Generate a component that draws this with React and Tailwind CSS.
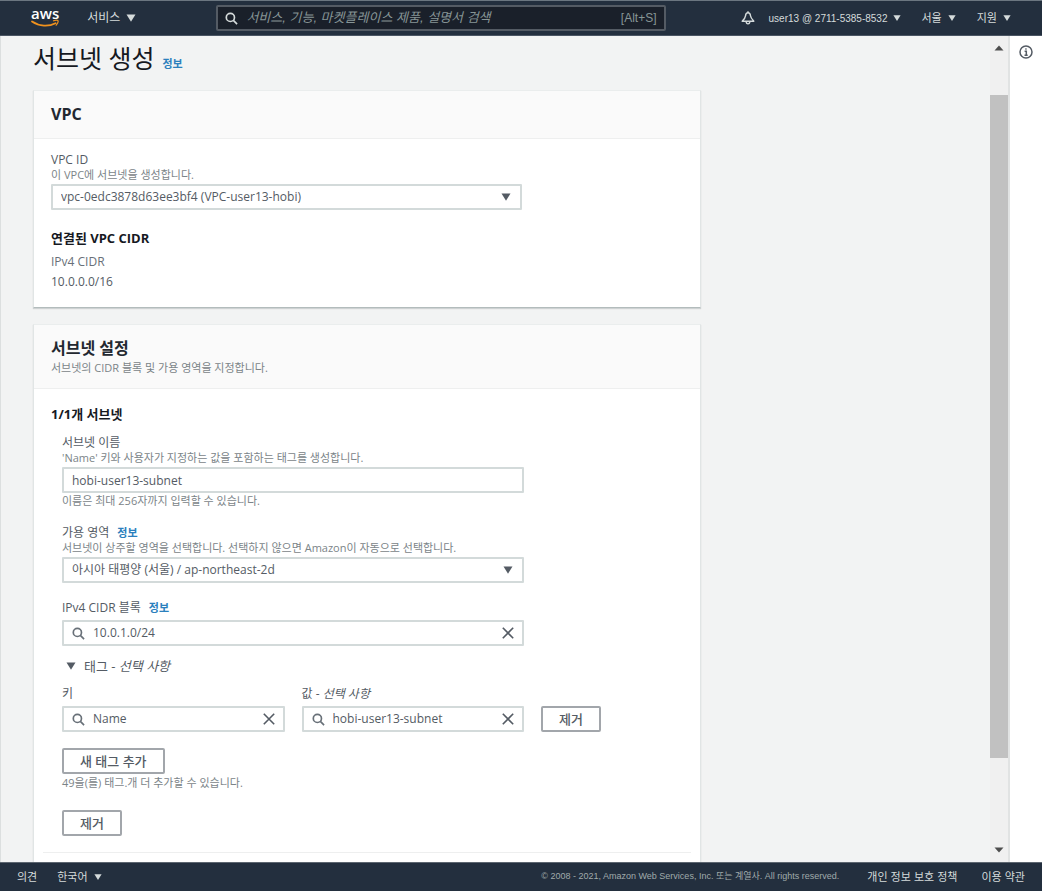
import { useState } from "react";

function Caret({ className = "h-2 w-[10px]" }) {
  return (
    <svg viewBox="0 0 10 8" className={className} fill="currentColor" aria-hidden="true">
      <path d="M0.5 0.5h9L5 7.7z" />
    </svg>
  );
}

function SearchIcon({ className }) {
  return (
    <svg
      viewBox="0 0 14 14"
      className={className}
      fill="none"
      stroke="currentColor"
      strokeWidth={1.8}
      aria-hidden="true"
    >
      <circle cx="5.8" cy="5.8" r="4.4" />
      <path d="M9 9l4 4" />
    </svg>
  );
}

function BellIcon() {
  return (
    <svg
      viewBox="0 0 14 14"
      className="h-[14px] w-[14px]"
      fill="none"
      stroke="currentColor"
      strokeWidth={1.4}
      strokeLinejoin="round"
      aria-hidden="true"
    >
      <path d="M7 1.8C5.6 1.8 4.7 3 4.5 4.8 4.300 7 3.300 8 1.200 10.200h11.600C10.700 8 9.700 7 9.500 4.800 9.300 3 8.400 1.800 7 1.800z" />
      <path d="M5.200 10.600c0 1.400.7 2.300 1.800 2.300s1.800-.9 1.800-2.300M7 0.300v1.500" />
    </svg>
  );
}

function Card({ title, description, children }) {
  return (
    <section className="border border-[#e1e5e5] border-t-[#eaeded] border-b-[#b3bcbc] bg-white shadow-[0_1px_1px_0_rgba(0,28,36,0.15)]">
      <header className="border-b border-[#eeefef] bg-[#fafafa] px-[17px] py-[13px]">
        <h2 className="text-[16px] leading-[21px] font-bold text-[#232830]">{title}</h2>
        {description ? (
          <p className="mt-[2px] text-[11px] leading-[14px] text-[#7b8488]">{description}</p>
        ) : null}
      </header>
      <div className="px-[17px]">{children}</div>
    </section>
  );
}

function InfoLink() {
  return (
    <a href="#info" className="ml-2 text-[11px] leading-none font-bold text-[#2b80bd]">
      정보
    </a>
  );
}

function Field({ id, label, info, description, hint, children }) {
  return (
    <div>
      <div className="text-[12px] leading-4 text-[#545b64]">
        <label htmlFor={id}>{label}</label>
        {info ? <InfoLink /> : null}
      </div>
      {description ? (
        <p className="text-[11px] leading-[14px] text-[#7b8488]">{description}</p>
      ) : null}
      <div className={description ? "mt-[2px]" : "mt-1"}>{children}</div>
      {hint ? <p className="mt-px text-[11px] leading-[14px] text-[#7b8488]">{hint}</p> : null}
    </div>
  );
}

function SelectBox({ id, options }) {
  return (
    <div className="relative">
      <select
        id={id}
        className="block h-[26px] w-full appearance-none rounded-[1px] border-2 border-[#d3dada] bg-white px-2 text-[12px] leading-4 text-[#545b64] outline-none"
      >
        {options.map((option) => (
          <option key={option}>{option}</option>
        ))}
      </select>
      <span className="pointer-events-none absolute inset-y-0 right-[11px] flex items-center text-[#545b64]">
        <Caret />
      </span>
    </div>
  );
}

function SearchBox({ id, value, onChange }) {
  return (
    <div className="flex h-[26px] items-center rounded-[1px] border-2 border-[#d3dada] bg-white px-2 text-[#687078]">
      <SearchIcon className="h-[13px] w-[13px] shrink-0" />
      <input
        id={id}
        type="text"
        value={value}
        onChange={(e) => onChange(e.target.value)}
        className="min-w-0 flex-1 bg-transparent pl-2 text-[12px] leading-4 text-[#545b64] outline-none"
      />
      <button type="button" aria-label="지우기" onClick={() => onChange("")} className="shrink-0">
        <svg
          viewBox="0 0 12 12"
          className="h-3 w-3"
          fill="none"
          stroke="#545b64"
          strokeWidth={1.6}
          aria-hidden="true"
        >
          <path d="M0.8 0.8l10.400 10.400M11.200 0.800L0.800 11.200" />
        </svg>
      </button>
    </div>
  );
}

function Button({ children }) {
  return (
    <button
      type="button"
      className="block h-[26px] rounded-[2px] border-2 border-[#a2a6ab] bg-white px-4 text-[13px] leading-4 font-medium text-[#545b64]"
    >
      {children}
    </button>
  );
}

function TopBar() {
  return (
    <header className="flex h-9 shrink-0 items-center border-t border-b border-t-[#6b7680] border-b-[#4a5563] bg-[#232f3e] pr-[31px] pl-[31px] text-[11px] text-[#d5dbdb]">
      <a href="#home" className="flex flex-col items-center">
        <span className="font-['Open_Sans',sans-serif] text-[15px] leading-[11px] font-semibold text-white">
          aws
        </span>
        <svg viewBox="0 0 28 9" className="h-[9px] w-7" fill="none" aria-hidden="true">
          <path
            d="M1 2.500c7.500 5 16.500 5.300 23.500 1.700"
            stroke="#f0921e"
            strokeWidth={1.800}
            strokeLinecap="round"
          />
          <path
            d="M22.500 1.800c2-.7 4-.6 4.400-.1.4.6-.2 2.800-1.700 4.500"
            stroke="#f0921e"
            strokeWidth={1.200}
            strokeLinecap="round"
          />
        </svg>
      </a>
      <button type="button" className="ml-7 flex items-center gap-[6px] text-[12px]">
        서비스
        <Caret />
      </button>
      <form className="mr-[75px] ml-20 flex h-[26px] flex-1 items-center rounded-[2px] border-2 border-[#545b64] bg-[#1a202a] px-[7px]">
        <SearchIcon className="h-[13px] w-[13px] shrink-0 text-[#d5dbdb]" />
        <input
          type="search"
          aria-label="검색"
          placeholder="서비스, 기능, 마켓플레이스 제품, 설명서 검색"
          className="ml-2 min-w-0 flex-1 bg-transparent text-[13px] outline-none placeholder:text-[#879596] placeholder:italic"
        />
        <span className="text-[12px] text-[#879596]">[Alt+S]</span>
      </form>
      <div className="flex items-center">
        <button type="button" aria-label="알림">
          <BellIcon />
        </button>
        <button type="button" className="ml-[14px] flex items-center gap-[5px] text-[10px]">
          user13 @ 2711-5385-8532
          <Caret className="h-2 w-2" />
        </button>
        <button type="button" className="ml-[21px] flex items-center gap-[6px]">
          서울
          <Caret className="h-2 w-2" />
        </button>
        <button type="button" className="ml-[21px] flex items-center gap-[6px]">
          지원
          <Caret className="h-2 w-2" />
        </button>
      </div>
    </header>
  );
}

function ScrollTrack() {
  return (
    <div className="flex w-[18px] shrink-0 flex-col items-center bg-[#f0f0f0] text-[#4d4d4d]">
      <svg viewBox="0 0 10 6" className="mt-[9px] h-[6px] w-[10px]" fill="currentColor">
        <path d="M5 0.500L9.500 5.500h-9z" />
      </svg>
      <div className="mt-11 w-full flex-[663] bg-[#c1c1c1]" />
      <div className="flex-[89]" />
      <svg viewBox="0 0 10 6" className="mb-[9px] h-[6px] w-[10px]" fill="currentColor">
        <path d="M5 5.500L9.500 0.500h-9z" />
      </svg>
    </div>
  );
}

export default function App() {
  const [name, setName] = useState("hobi-user13-subnet");
  const [cidr, setCidr] = useState("10.0.1.0/24");
  const [tagKey, setTagKey] = useState("Name");
  const [tagValue, setTagValue] = useState("hobi-user13-subnet");

  return (
    <div className="flex h-screen flex-col bg-[#f2f3f3] font-['Liberation_Sans','Noto_Sans_CJK_KR',sans-serif]">
      <TopBar />

      <div className="flex min-h-0 flex-1">
        <main className="min-w-0 flex-1 overflow-hidden border-l border-[#dcdfdf] pl-8 font-['Open_Sans','Noto_Sans_CJK_KR',sans-serif]">
          <h1 className="pt-[6px] text-[25px] leading-8 text-[#16191f]">
            서브넷 생성
            <InfoLink />
          </h1>

          <div className="mt-4 flex max-w-[668px] flex-col gap-4">
            <Card title="VPC">
              <div className="max-w-[471px] pt-[13px]">
                <Field id="vpc-id" label="VPC ID" description="이 VPC에 서브넷을 생성합니다.">
                  <SelectBox id="vpc-id" options={["vpc-0edc3878d63ee3bf4 (VPC-user13-hobi)"]} />
                </Field>
              </div>
              <h3 className="mt-5 text-[13px] leading-4 font-bold text-[#16191f]">
                연결된 VPC CIDR
              </h3>
              <dl className="pb-[17px] text-[12px] leading-4">
                <dt className="mt-2 text-[#687078]">IPv4 CIDR</dt>
                <dd className="mt-1 text-[#545b64]">10.0.0.0/16</dd>
              </dl>
            </Card>

            <Card
              title="서브넷 설정"
              description="서브넷의 CIDR 블록 및 가용 영역을 지정합니다."
            >
              <h3 className="pt-[17px] text-[13px] leading-4 font-bold text-[#16191f]">
                1/1개 서브넷
              </h3>
              <div className="mt-[13px] px-[11px]">
                <div className="flex max-w-[462px] flex-col gap-[17px]">
                  <Field
                    id="subnet-name"
                    label="서브넷 이름"
                    description="'Name' 키와 사용자가 지정하는 값을 포함하는 태그를 생성합니다."
                    hint="이름은 최대 256자까지 입력할 수 있습니다."
                  >
                    <input
                      id="subnet-name"
                      type="text"
                      value={name}
                      onChange={(e) => setName(e.target.value)}
                      className="block h-[26px] w-full rounded-[1px] border-2 border-[#d3dada] bg-white px-2 text-[12px] leading-4 text-[#545b64] outline-none"
                    />
                  </Field>
                  <Field
                    id="zone"
                    label="가용 영역"
                    info
                    description="서브넷이 상주할 영역을 선택합니다. 선택하지 않으면 Amazon이 자동으로 선택합니다."
                  >
                    <SelectBox id="zone" options={["아시아 태평양 (서울) / ap-northeast-2d"]} />
                  </Field>
                  <Field id="cidr" label="IPv4 CIDR 블록" info>
                    <SearchBox id="cidr" value={cidr} onChange={setCidr} />
                  </Field>
                </div>

                <button
                  type="button"
                  className="mt-3 flex items-center gap-2 pl-1 text-[13px] leading-4 text-[#545b64]"
                >
                  <Caret />
                  <span>
                    태그 - <i>선택 사항</i>
                  </span>
                </button>

                <div className="mt-3 flex items-end gap-[17px]">
                  <div className="flex w-full max-w-[462px] gap-[17px]">
                    <div className="flex-1">
                      <Field id="tag-key" label="키">
                        <SearchBox id="tag-key" value={tagKey} onChange={setTagKey} />
                      </Field>
                    </div>
                    <div className="flex-1">
                      <Field
                        id="tag-value"
                        label={
                          <>
                            값 - <i>선택 사항</i>
                          </>
                        }
                      >
                        <SearchBox id="tag-value" value={tagValue} onChange={setTagValue} />
                      </Field>
                    </div>
                  </div>
                  <Button>제거</Button>
                </div>

                <div className="mt-4">
                  <Button>새 태그 추가</Button>
                  <p className="mt-[2px] text-[11px] leading-[14px] text-[#7b8488]">
                    49을(를) 태그.개 더 추가할 수 있습니다.
                  </p>
                </div>
                <div className="mt-5">
                  <Button>제거</Button>
                </div>
              </div>
              <hr className="-mx-2 mt-4 mb-8 border-[#eeefef]" />
            </Card>
          </div>
        </main>

        <ScrollTrack />

        <aside className="flex w-[34px] shrink-0 justify-center border-l-2 border-[#e1e3e3] bg-white">
          <button type="button" aria-label="정보" className="mt-[9px] h-[14px] w-[14px] text-[#545b64]">
            <svg
              viewBox="0 0 14 14"
              className="h-[14px] w-[14px]"
              fill="none"
              stroke="currentColor"
              strokeWidth={1.500}
            >
              <circle cx="7" cy="7" r="6" />
              <path d="M5.600 6.300h1.700v3.900M5.500 10.200h3.200M6.300 4h1.300" />
            </svg>
          </button>
        </aside>
      </div>

      <footer className="flex h-[29px] shrink-0 items-center border-t border-[#5d6670] bg-[#232f3e] px-[17px] text-[11px] text-[#d5dbdb]">
        <a href="#feedback">의견</a>
        <button type="button" className="ml-5 flex items-center gap-[6px]">
          한국어
          <Caret className="h-2 w-2" />
        </button>
        <span className="ml-auto text-[9px] text-[#a0abab]">
          © 2008 - 2021, Amazon Web Services, Inc. 또는 계열사. All rights reserved.
        </span>
        <a href="#privacy" className="ml-7">
          개인 정보 보호 정책
        </a>
        <a href="#terms" className="ml-6">
          이용 약관
        </a>
      </footer>
    </div>
  );
}
